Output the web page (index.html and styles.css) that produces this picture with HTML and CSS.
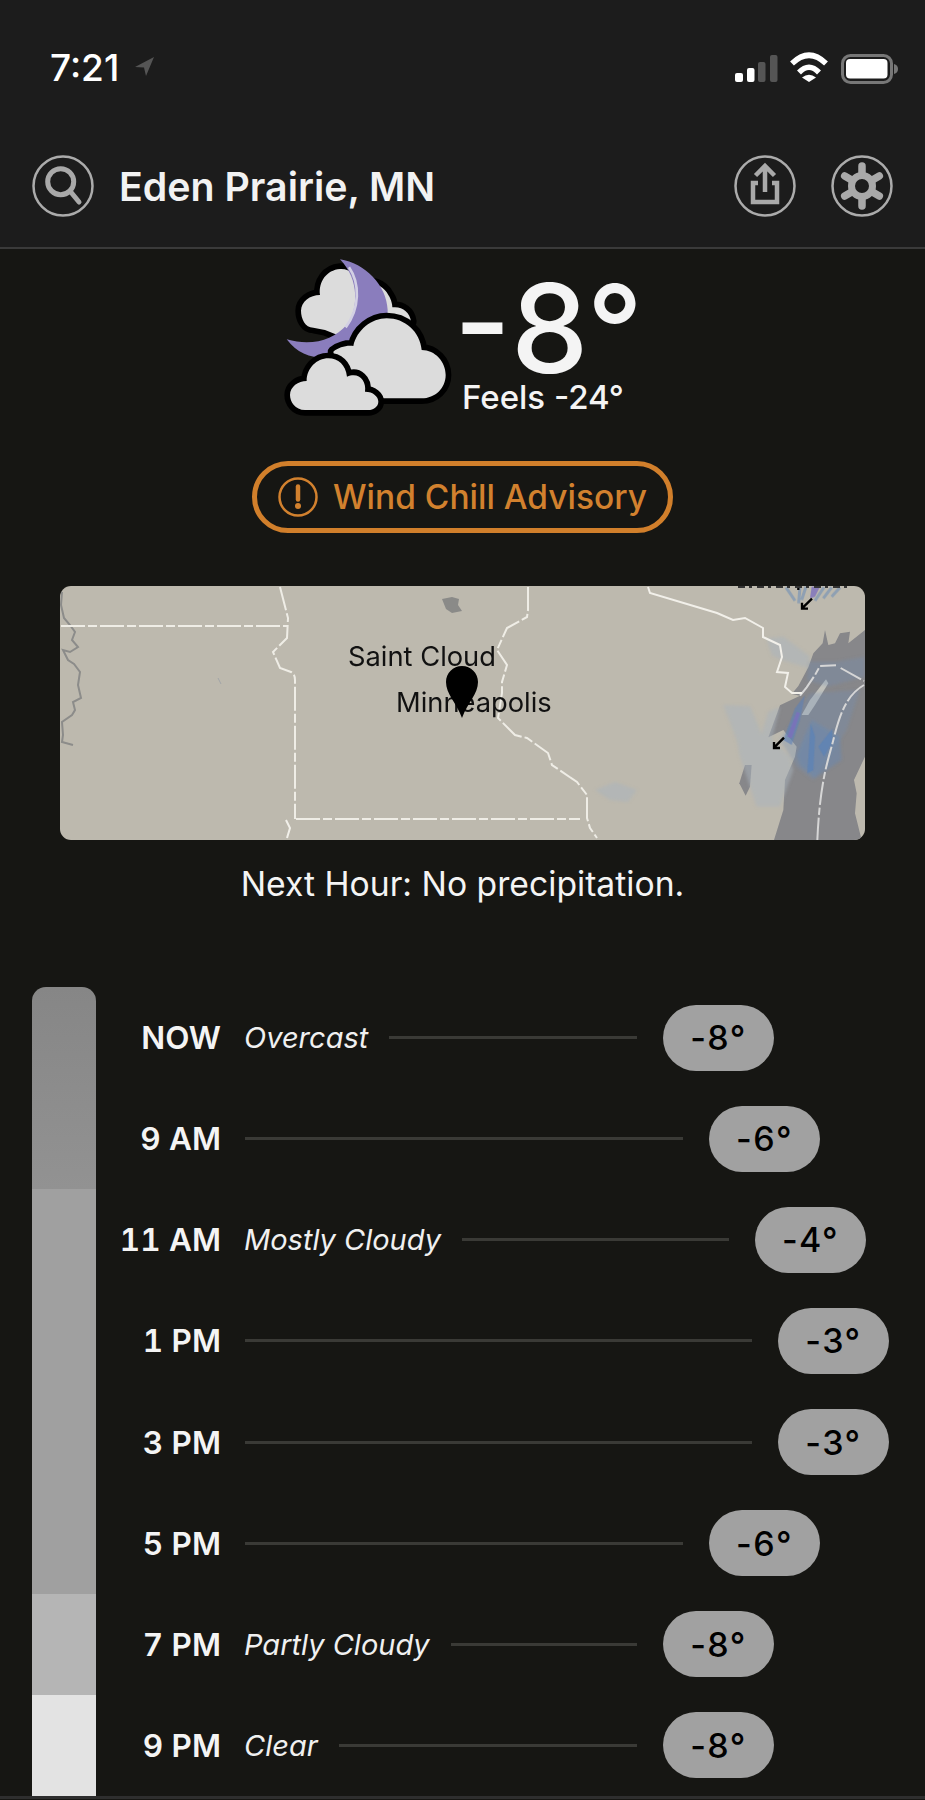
FILE: index.html
```html
<!DOCTYPE html>
<html lang="en">
<head>
  <meta charset="UTF-8">
  <title>Eden Prairie, MN</title>
  <link rel="stylesheet" href="styles.css">
</head>
<body>
  <header class="top">
    <div class="status">
      <div class="clock">
        <span class="time">7:21</span>
        <svg class="loc-arrow" width="20" height="20" viewBox="136 58 20 20"><polygon points="156,58 137,68 146,68.500 148,77"/></svg>
      </div>
      <svg class="status-icons" width="170" height="34" viewBox="730 50 170 34">
        <rect class="on" x="734" y="72" width="8" height="9" rx="2"/>
        <rect class="on" x="746" y="67" width="7.500" height="14" rx="2"/>
        <rect class="off" x="757" y="61" width="7.500" height="20" rx="2"/>
        <rect class="off" x="769" y="54" width="7.500" height="27" rx="2"/>
        <path class="wifi" d="M791 62.500Q808 46 825 62.500"/>
        <path class="wifi" d="M798 71.500Q808 61 818 71.500"/>
        <path class="on" d="M801 76.500Q808 71 815 76.500L808 81Z"/>
        <rect class="batt" x="841.500" y="54.500" width="49" height="27" rx="8"/>
        <rect class="on" x="845" y="58" width="41.500" height="19.500" rx="4"/>
        <path class="off-2" d="M893 63Q897 64 897 68Q897 72 893 73Z"/>
      </svg>
    </div>
    <nav class="nav">
      <button class="round-btn">
        <svg viewBox="0 0 62 62" width="62" height="62">
          <circle class="ring" cx="31" cy="31" r="29.500"/>
          <circle class="glyph" cx="28.700" cy="26.700" r="13"/>
          <path class="glyph" d="M38 36L47 47"/>
        </svg>
      </button>
      <h1 class="city">Eden Prairie, MN</h1>
      <button class="round-btn">
        <svg viewBox="0 0 62 62" width="62" height="62">
          <circle class="ring" cx="31" cy="31" r="29.500"/>
          <path class="glyph square" d="M24 28H19V47H43V28H38"/>
          <path class="glyph square" d="M31 37V12M21.500 20.500L31 11L40.500 20.500"/>
        </svg>
      </button>
      <button class="round-btn">
        <svg viewBox="0 0 62 62" width="62" height="62">
          <circle class="ring" cx="31" cy="31" r="29.500"/>
          <path class="spoke" d="M31 11V51M13.700 21L48.300 41M13.700 41L48.300 21"/>
          <circle class="hub" cx="31" cy="31" r="10.500"/>
        </svg>
      </button>
    </nav>
  </header>

  <main class="content">
    <section class="hero">
      <svg class="wx-icon" width="190" height="175" viewBox="0 0 570 525">
        <path class="cloud" d="M115 233C90 233 78 205 78 182C78 155 105 135 135 135C130 95 155 60 195 57C225 55 255 80 262 105C285 90 325 105 340 135C350 150 352 165 352 172C380 168 405 185 408 215L300 300L150 240Z"/>
        <path class="moon" d="M195 28C270 40 335 105 338 180C340 245 270 310 180 322C120 330 70 315 35 268C110 290 175 270 215 225C250 180 255 90 195 28Z"/>
        <path class="moon-rim" d="M222 52C255 100 255 175 212 232"/>
        <path class="cloud" d="M235 288C245 240 290 205 335 205C390 205 435 245 440 300C480 300 512 335 512 375C512 415 480 445 440 445H200L175 305C190 292 215 285 235 288Z"/>
        <path class="cloud" d="M90 480C60 480 45 455 45 435C45 410 70 393 95 393C95 355 125 325 160 325C190 325 212 345 216 380C250 365 275 390 270 425C295 425 310 440 310 455C310 470 295 480 280 480Z"/>
      </svg>
      <div class="hero-temp">
        <div class="temp">-8°</div>
        <div class="feels">Feels -24°</div>
      </div>
    </section>

    <div class="alert-wrap">
      <div class="alert">
        <svg width="40" height="40" viewBox="0 0 40 40">
          <circle class="alert-ring" cx="20" cy="20" r="18.500"/>
          <path class="alert-mark" d="M20 9.500V22.500"/>
          <circle class="alert-dot" cx="20" cy="29" r="3"/>
        </svg>
        <span>Wind Chill Advisory</span>
      </div>
    </div>

    <div class="map">
      <svg class="map-art" width="805" height="254" viewBox="60 586 805 254">
        <defs>
          <filter id="edge"><feGaussianBlur stdDeviation="0.600"/></filter>
          <filter id="soft"><feGaussianBlur stdDeviation="1.500"/></filter>
          <filter id="softer"><feGaussianBlur stdDeviation="4"/></filter>
        </defs>
        <path class="lake-small" d="M442 599L452 597L459 599L458 605L462 611L452 613L446 609Z"/>
        <path class="river" d="M62 592L61 605L64 618L70 625L75 632L72 640L78 647L70 652L63 650L68 660L74 664L80 672L78 685L81 698L73 702L75 710L72 715L62 722L63 735L62 742L73 745"/>
        <path class="river-thin" d="M218 678L221 684"/>
        <g transform="translate(700 580) scale(.33333)">
          <g filter="url(#edge)">
            <path class="water" d="M375 150L368 190L340 220L325 262L295 318L275 342L300 347L240 376L205 472L250 450L290 500L285 530L255 600L250 690L222 780H485L465 700L470 640L462 600L495 530V150L445 190L450 155L420 160L405 190L385 195Z"/>
            <path class="water" d="M135 555L155 555L150 620L137 647L118 610Z"/>
          </g>
          <path class="door-light" d="M378 298L385 310L345 375L325 405L305 405L330 360Z"/>
          <g filter="url(#softer)">
            <path class="rain-pale" d="M200 175L250 170L330 230L320 262L245 240L215 225Z"/>
            <path class="rain-pale" d="M70 375L150 378L185 462L205 395L240 380L215 480L270 530L280 570L240 680L170 680L120 530L110 480Z"/>
            <path class="rain-blue" d="M290 525L335 420L420 470L425 540L345 595L300 555Z"/>
            <path class="rain-tint" d="M325 245L410 245L495 230V290L385 320L320 300Z"/>
            <path class="rain-tint" d="M240 480L330 340L480 330L440 450L340 600L290 560Z"/>
          </g>
          <g filter="url(#soft)">
            <path class="rain-deep" d="M322 580L332 430L345 470L340 570Z"/>
            <path class="rain-deep" d="M355 500L398 445L395 490L372 530Z"/>
            <path class="rain-mid" d="M250 480L285 385L315 345L300 420L275 495Z"/>
            <path class="rain-streak" d="M258 22L285 62M300 20L296 70M318 20L305 60M372 22L345 62M395 22L370 55M420 22L395 50"/>
            <path class="rain-purple" d="M262 470L290 395L300 400L275 475Z"/>
            <path class="rain-purple" d="M335 20H360L345 50L330 55Z"/>
          </g>
          <path class="border-lake" d="M300 347L320 322L345 285L360 258L408 256M422 264L492 303"/>
          <path class="border-lake" d="M492 315C440 345 420 400 400 480C385 540 360 600 352 780"/>
          <path class="arrow" d="M336 56L306 85M306 68V86H324"/>
          <path class="arrow" d="M252 473L222 503M222 486V504H240"/>
          <path class="arrow" d="M295 14V30"/>
        </g>
        <path class="border" d="M61 626H288"/>
        <path class="border" d="M280 587L288 618L287 638L273 652L280 668L291 672Q295 674 295 680V819"/>
        <path class="border" d="M296 819H580"/>
        <path class="border-solid" d="M286 820L290 828L287 838"/>
        <path class="border" d="M528 587V610L527 617L507 628L497 650L507 665L502 682V693L498 718L515 735L527 738L548 753L552 765L577 782L587 795L587 818L590 828L597 838"/>
        <path class="border-solid" d="M648 587L650 593L717 613L733 620L745 618L763 628L763 637L780 645L782 657L777 672L788 673L785 687L792 693H802"/>
        <path class="cut-label" d="M738 587H850"/>
        <g filter="url(#soft)">
          <path class="rain-pale" d="M595 790L615 782L637 790L628 802L610 800Z"/>
        </g>
      </svg>
      <span class="map-label label-cloud">Saint Cloud</span>
      <span class="map-label label-mpls">Minneapolis</span>
      <svg class="pin" width="32" height="52" viewBox="0 0 32 52"><path d="M16 0C25 0 32 7 32 16C32 28 22 36 16 52C10 36 0 28 0 16C0 7 7 0 16 0Z"/></svg>
    </div>

    <p class="next-hour">Next Hour: No precipitation.</p>

    <section class="timeline">
      <div class="bar">
        <div class="seg seg-overcast"></div>
        <div class="seg seg-mostly"></div>
        <div class="seg seg-partly"></div>
        <div class="seg seg-clear"></div>
      </div>
      <div class="rows">
        <div class="row t-8"><span class="hour">NOW</span><span class="cond">Overcast</span><i class="rule"></i><span class="deg">-8°</span></div>
        <div class="row t-6"><span class="hour">9 AM</span><i class="rule"></i><span class="deg">-6°</span></div>
        <div class="row t-4"><span class="hour">11 AM</span><span class="cond">Mostly Cloudy</span><i class="rule"></i><span class="deg">-4°</span></div>
        <div class="row t-3"><span class="hour">1 PM</span><i class="rule"></i><span class="deg">-3°</span></div>
        <div class="row t-3"><span class="hour">3 PM</span><i class="rule"></i><span class="deg">-3°</span></div>
        <div class="row t-6"><span class="hour">5 PM</span><i class="rule"></i><span class="deg">-6°</span></div>
        <div class="row t-8"><span class="hour">7 PM</span><span class="cond">Partly Cloudy</span><i class="rule"></i><span class="deg">-8°</span></div>
        <div class="row t-8"><span class="hour">9 PM</span><span class="cond">Clear</span><i class="rule"></i><span class="deg">-8°</span></div>
      </div>
    </section>
    <div class="tab-line"></div>
  </main>
</body>
</html>
```

FILE: styles.css
```css
html, body { margin:0; padding:0; }
body {
  width:925px; height:1800px; overflow:hidden;
  background:#161613; color:#f4f4f4;
  font-family:"Inter", "Liberation Sans", sans-serif;
}

/* top bar */
.top {
  background:#1c1c1c;
  height:247px;
  border-bottom:2px solid #3a3a3a;
  box-sizing:content-box;
}
.status {
  display:flex; justify-content:space-between; align-items:center;
  height:50px; padding:43px 24px 0 50px;
}
.clock { display:flex; align-items:center; gap:15px; }
.time { font-size:37px; font-weight:500; line-height:50px; color:#fff; }
.loc-arrow { fill:#555; margin-top:-2px; }
.status-icons { display:block; }
.status-icons .on { fill:#fff; }
.status-icons .off { fill:#555; }
.status-icons .off-2 { fill:#777; }
.status-icons .wifi { fill:none; stroke:#fff; stroke-width:5.500; }
.status-icons .batt { fill:none; stroke:#777; stroke-width:3; }

.nav {
  display:flex; align-items:center;
  margin-top:62px; padding:0 32px;
}
.city {
  flex:1; margin:0 0 0 25px;
  font-size:39.300px; font-weight:600; color:#f2f2f2;
}
.round-btn {
  width:62px; height:62px; padding:0; margin:0;
  background:none; border:none;
}
.round-btn svg { display:block; }
.round-btn + .round-btn { margin-left:35px; }
.ring { fill:none; stroke:#ababab; stroke-width:2.500; }
.glyph { fill:none; stroke:#a9a9a9; stroke-width:5; stroke-linecap:round; }
.glyph.square { stroke-linecap:butt; stroke-width:4.500; }
.spoke { fill:none; stroke:#a9a9a9; stroke-width:7.500; stroke-linecap:round; }
.hub { fill:#1c1c1c; stroke:#a9a9a9; stroke-width:7; }

/* current conditions */
.hero { display:flex; padding-left:275px; height:176px; }
.wx-icon { display:block; flex:none; margin-top:1px; }
.cloud { fill:#dcdcdc; stroke:#000; stroke-width:34; stroke-linejoin:round; paint-order:stroke; }
.moon { fill:#8a7dbd; }
.moon-rim { fill:none; stroke:#d3d0e4; stroke-width:8; }
.hero-temp { margin-left:-11px; }
.temp {
  font-size:123px; font-weight:550; line-height:100px;
  margin-top:30px; white-space:nowrap;
}
.feels { font-size:33px; font-weight:500; line-height:36px; padding-left:8px; white-space:nowrap; }

.alert-wrap { display:flex; justify-content:center; margin-top:36px; }
.alert {
  display:flex; align-items:center; gap:15px;
  height:62px; padding:0 21px;
  border:5px solid #d17f2b; border-radius:36px;
  color:#d2812e; font-size:33.500px; font-weight:500;
}
.alert svg { display:block; }
.alert-ring { fill:none; stroke:#d2812e; stroke-width:2.500; }
.alert-mark { fill:none; stroke:#d2812e; stroke-width:4.500; stroke-linecap:round; }
.alert-dot { fill:#d2812e; }

/* radar map */
.map {
  position:relative; overflow:hidden;
  width:805px; height:254px;
  margin:53px 0 0 60px;
  background:#bdb9ae; border-radius:11px;
}
.map-art { display:block; }
.lake-small { fill:#8a8a88; }
.river { fill:none; stroke:#8c8c8a; stroke-width:2; }
.river-thin { fill:none; stroke:#a2a5a8; stroke-width:1; }
.border { fill:none; stroke:#efede6; stroke-width:2; stroke-dasharray:24 3 9 3; }
.border-solid { fill:none; stroke:#f2f0ea; stroke-width:2; }
.border-lake { fill:none; stroke:#d6d6d6; stroke-width:6; stroke-dasharray:70 8 22 8; }
.cut-label { stroke:#333; stroke-width:2; stroke-dasharray:7 4 3 5; }
.water { fill:#87878a; }
.door-light { fill:#c2c2bc; }
.rain-pale { fill:#a9b3be; opacity:.5; }
.rain-blue { fill:#5f86bc; opacity:.4; }
.rain-tint { fill:#6f8fb5; opacity:.3; }
.rain-deep { fill:#4f7fc0; opacity:.5; }
.rain-mid { fill:#5d80b8; opacity:.6; }
.rain-streak { fill:none; stroke:#6f8fb5; stroke-width:9; opacity:.6; }
.rain-purple { fill:#7d70bd; opacity:.8; }
.arrow { fill:none; stroke:#000; stroke-width:7; }
.map-label {
  position:absolute;
  font-size:27.300px; line-height:30px; color:#111; white-space:nowrap;
}
.label-cloud { left:288px; top:56px; }
.label-mpls { left:336px; top:102px; }
.pin { position:absolute; left:386px; top:80px; fill:#000; }

.next-hour {
  margin:24px 0 0; text-align:center;
  font-size:33.700px; line-height:40px; color:#f4f4f4;
}

/* hourly list */
.timeline { display:flex; margin-top:83px; padding-left:32px; }
.bar {
  flex:none; width:64px; height:809px;
  display:flex; flex-direction:column;
  border-radius:14px 14px 0 0; overflow:hidden;
}
.seg-overcast { height:202px; background:linear-gradient(#868686, #929292); }
.seg-mostly { height:405px; background:#a0a0a0; }
.seg-partly { height:101px; background:#b5b5b5; }
.seg-clear { height:101px; background:#e3e3e3; }
.rows { flex:1; }
.row {
  display:flex; align-items:center;
  height:101.130px;
  box-sizing:border-box;
}
.hour {
  flex:none; width:125px; text-align:right;
  font-size:31.500px; font-weight:600; color:#f4f4f4; white-space:nowrap;
  font-variant-numeric:tabular-nums;
}
.cond {
  margin-left:23px;
  font-size:29px; font-style:italic; color:#f0f0f0; white-space:nowrap;
}
.rule {
  flex:1; height:3px; background:#3a3a36;
  margin:0 26px 0 21px;
}
.hour + .rule { margin-left:24px; }
.deg {
  flex:none; width:111px; height:66px;
  display:flex; align-items:center; justify-content:center;
  background:#a1a1a1; border-radius:33px;
  font-size:34px; font-weight:500; color:#000;
  letter-spacing:1.500px;
}
.t-8 { padding-right:151px; }
.t-6 { padding-right:105px; }
.t-4 { padding-right:59px; }
.t-3 { padding-right:36px; }
.tab-line { height:3px; background:#2e2e2e; }
```
